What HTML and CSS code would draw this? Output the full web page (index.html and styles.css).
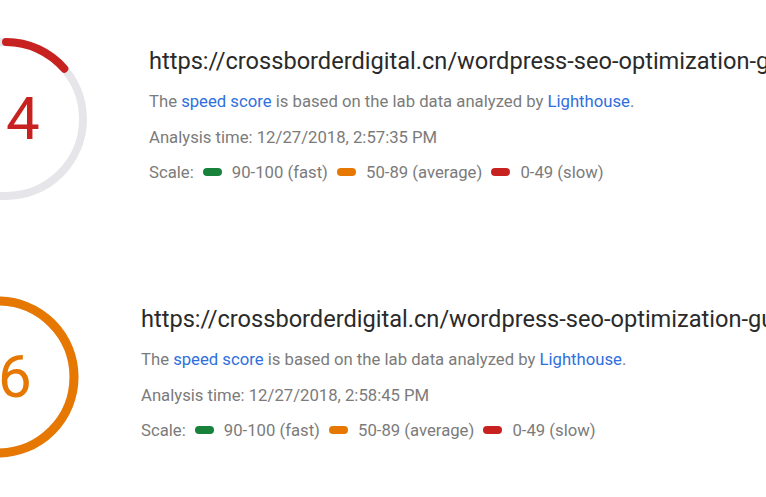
FILE: index.html
```html
<!DOCTYPE html>
<html>
<head>
<meta charset="utf-8">
<link rel="stylesheet" href="styles.css">
</head>
<body>
<div class="report">
  <section class="result">
    <div class="gauge">
      <svg width="162" height="162" viewBox="0 0 162 162">
        <circle cx="81" cy="81" r="77" fill="none" stroke="#e6e6ea" stroke-width="8"/>
        <circle cx="81" cy="81" r="77" fill="none" stroke="#c7221f" stroke-width="8" stroke-linecap="round" stroke-dasharray="66 1000" transform="rotate(-90 81 81)"/>
      </svg>
      <span class="score score-slow">14</span>
    </div>
    <div class="info">
      <div class="url">https://crossborderdigital.cn/wordpress-seo-optimization-guide/</div>
      <p class="line">The <a class="link">speed score</a> is based on the lab data analyzed by <a class="link">Lighthouse</a>.</p>
      <p class="line">Analysis time: 12/27/2018, 2:57:35 PM</p>
      <p class="line scale">Scale: <span class="pill pill-fast"></span>90-100 (fast) <span class="pill pill-avg"></span>50-89 (average) <span class="pill pill-slow"></span>0-49 (slow)</p>
    </div>
  </section>
  <section class="result result-shift">
    <div class="gauge">
      <svg width="162" height="162" viewBox="0 0 162 162">
        <circle cx="81" cy="81" r="76" fill="none" stroke="#e6e6ea" stroke-width="9"/>
        <circle cx="81" cy="81" r="76" fill="none" stroke="#e67700" stroke-width="9" stroke-linecap="round" stroke-dasharray="360 1000" transform="rotate(-90 81 81)"/>
      </svg>
      <span class="score score-avg">76</span>
    </div>
    <div class="info">
      <div class="url">https://crossborderdigital.cn/wordpress-seo-optimization-guide/</div>
      <p class="line">The <a class="link">speed score</a> is based on the lab data analyzed by <a class="link">Lighthouse</a>.</p>
      <p class="line">Analysis time: 12/27/2018, 2:58:45 PM</p>
      <p class="line scale">Scale: <span class="pill pill-fast"></span>90-100 (fast) <span class="pill pill-avg"></span>50-89 (average) <span class="pill pill-slow"></span>0-49 (slow)</p>
    </div>
  </section>
</div>
</body>
</html>
```
FILE: styles.css
```css
html, body {
  margin: 0;
  padding: 0;
  background: #ffffff;
  overflow: hidden;
}
body {
  width: 766px;
  height: 497px;
  font-family: Roboto, "Liberation Sans", sans-serif;
}
.report {
  display: flex;
  flex-direction: column;
  gap: 96px;
  padding-top: 38px;
}
.result {
  display: flex;
  align-items: flex-start;
  gap: 62px;
  margin-left: -75px;
  white-space: nowrap;
}
.result-shift {
  margin-left: -83px;
}
.gauge {
  position: relative;
  width: 162px;
  height: 162px;
  flex: none;
}
.gauge svg {
  display: block;
}
.score {
  position: absolute;
  left: 0;
  right: 0;
  top: 50%;
  transform: translateY(-50%);
  text-align: center;
  font-size: 60px;
  line-height: 1;
}
.score-slow { color: #c7221f; }
.score-avg { color: #e67700; }
.info {
  padding-top: 7px;
  min-width: 0;
}
.url {
  font-size: 23.6px;
  line-height: 32px;
  color: #2a2a2a;
  margin-bottom: 7px;
}
.line {
  margin: 0;
  font-size: 16.7px;
  line-height: 35.5px;
  color: #7b7b7b;
}
.link {
  color: #2f6fde;
  text-decoration: none;
}
.pill {
  display: inline-block;
  width: 19px;
  height: 8px;
  border-radius: 4px;
  margin: 0 10px 0 5px;
  vertical-align: 2px;
}
.pill-fast { background: #178239; }
.pill-avg { background: #e67700; }
.pill-slow { background: #c7221f; }
```
